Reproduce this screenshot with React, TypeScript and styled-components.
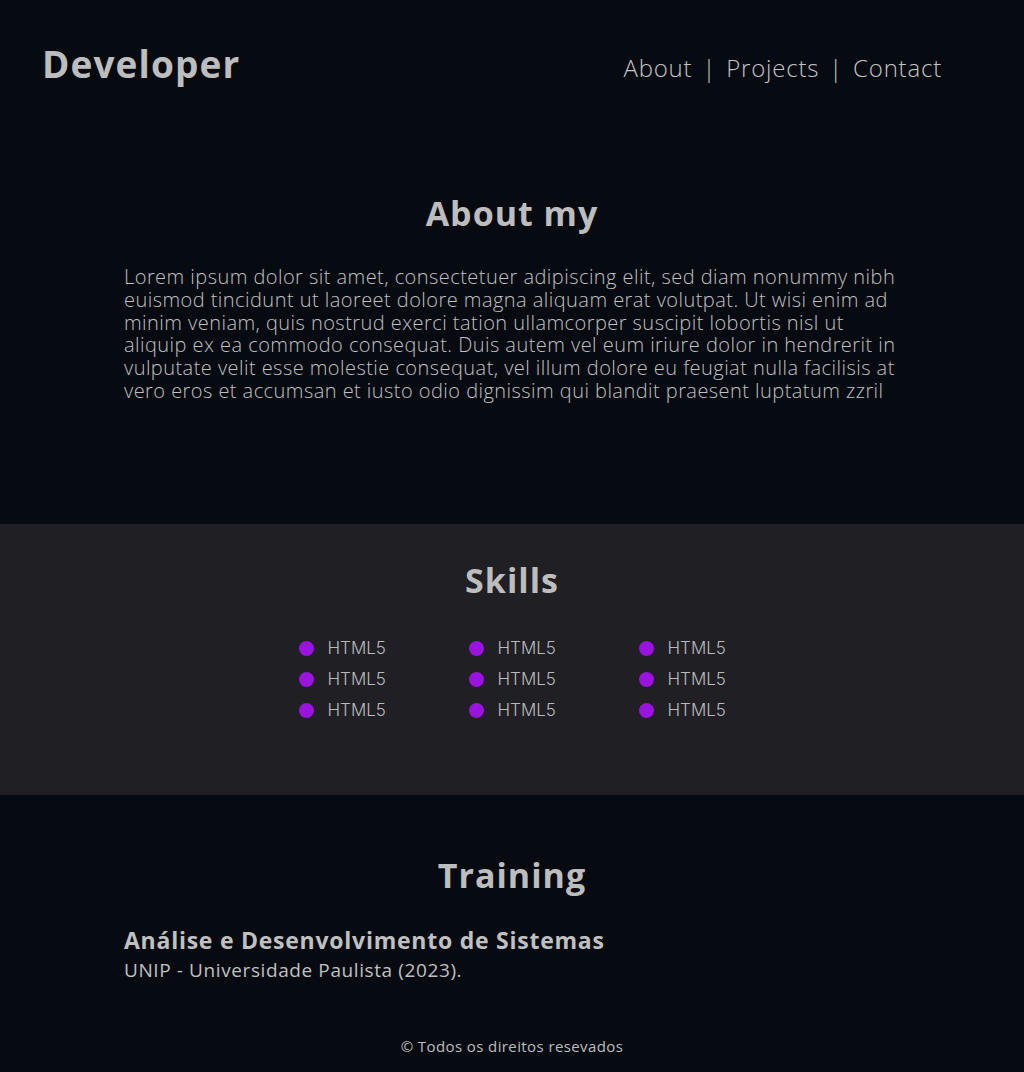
import React from 'react';
import styled, { createGlobalStyle } from 'styled-components';

const GlobalStyle = createGlobalStyle`
  * { box-sizing: border-box; }
  body {
    margin: 0;
    background: #060b11;
    font-family: "Open Sans", "Liberation Sans", sans-serif;
    color: #bcbcbc;
  }
`;

const Page = styled.div`
  width: 1024px;
  min-height: 1072px;
  background: #060b11;
`;

const Header = styled.header`
  display: flex;
  align-items: flex-start;
  justify-content: space-between;
  padding: 38px 82px 0 42px;
  height: 130px;
`;

const Logo = styled.h1`
  margin: 0;
  font-size: 37px;
  font-weight: 700;
  color: #bdbdbd;
  letter-spacing: 1.1px;
`;

const Nav = styled.nav`
  display: flex;
  align-items: center;
  gap: 10px;
  margin-top: 13px;
  font-size: 24px;
  font-weight: 300;
  letter-spacing: 0.8px;
  color: #c4c4c4;
`;

const NavLink = styled.a`
  color: inherit;
  text-decoration: none;
`;

const Section = styled.section<{ $alt?: boolean }>`
  background: ${(p) => (p.$alt ? '#202024' : '#060b11')};
  padding: ${(p) => (p.$alt ? '33px 0 74px' : '57px 0 0')};
`;

const Title = styled.h2`
  margin: 0;
  text-align: center;
  font-size: 34px;
  font-weight: 700;
  letter-spacing: 1px;
  color: #bdbdbd;
`;

const Text = styled.p`
  width: 776px;
  margin: 30px auto 0;
  font-size: 20px;
  font-weight: 300;
  letter-spacing: 0.45px;
  line-height: 22.8px;
  color: #c0c0c0;
`;

const AboutSection = styled(Section)`
  height: 524px;
  padding-top: 190px;
  margin-top: -130px;
`;

const SkillGrid = styled.ul`
  list-style: none;
  margin: 34px auto 0;
  padding: 0;
  width: fit-content;
  display: grid;
  grid-template-columns: repeat(3, 87px);
  column-gap: 83px;
  row-gap: 9px;
`;

const Skill = styled.li`
  display: flex;
  align-items: center;
  gap: 14px;
  font-family: Inter, "Liberation Sans", sans-serif;
  font-size: 17px;
  font-weight: 300;
  color: #bababa;
  height: 22px;
  white-space: nowrap;
`;

const Dot = styled.span`
  width: 15px;
  height: 15px;
  border-radius: 50%;
  background: #9a13e0;
  flex-shrink: 0;
`;

const Training = styled.div`
  width: 776px;
  margin: 26px auto 0;
`;

const Course = styled.h3`
  margin: 0;
  font-size: 23px;
  font-weight: 700;
  letter-spacing: 0.75px;
  color: #c0c0c0;
`;

const School = styled.p`
  margin: 1px 0 0;
  font-size: 19px;
  font-weight: 400;
  letter-spacing: 0.6px;
  color: #c0c0c0;
`;

const Footer = styled.footer`
  text-align: center;
  padding: 53px 0 14px;
  font-size: 15px;
  letter-spacing: 0.4px;
  color: #bdbdbd;
`;

const skills = Array.from({ length: 9 }, () => 'HTML5');

export default function App() {
  return (
    <Page>
      <GlobalStyle />
      <Header>
        <Logo>Developer</Logo>
        <Nav>
          <NavLink href="#about">About</NavLink>
          <span>|</span>
          <NavLink href="#projects">Projects</NavLink>
          <span>|</span>
          <NavLink href="#contact">Contact</NavLink>
        </Nav>
      </Header>
      <AboutSection id="about">
        <Title>About my</Title>
        <Text>
          Lorem ipsum dolor sit amet, consectetuer adipiscing elit, sed diam nonummy nibh euismod
          tincidunt ut laoreet dolore magna aliquam erat volutpat. Ut wisi enim ad minim veniam,
          quis nostrud exerci tation ullamcorper suscipit lobortis nisl ut aliquip ex ea commodo
          consequat. Duis autem vel eum iriure dolor in hendrerit in vulputate velit esse molestie
          consequat, vel illum dolore eu feugiat nulla facilisis at vero eros et accumsan et iusto
          odio dignissim qui blandit praesent luptatum zzril
        </Text>
      </AboutSection>
      <Section $alt>
        <Title>Skills</Title>
        <SkillGrid>
          {skills.map((s, i) => (
            <Skill key={i}>
              <Dot />
              {s}
            </Skill>
          ))}
        </SkillGrid>
      </Section>
      <Section>
        <Title>Training</Title>
        <Training>
          <Course>Análise e Desenvolvimento de Sistemas</Course>
          <School>UNIP - Universidade Paulista (2023).</School>
        </Training>
        <Footer>© Todos os direitos resevados</Footer>
      </Section>
    </Page>
  );
}
